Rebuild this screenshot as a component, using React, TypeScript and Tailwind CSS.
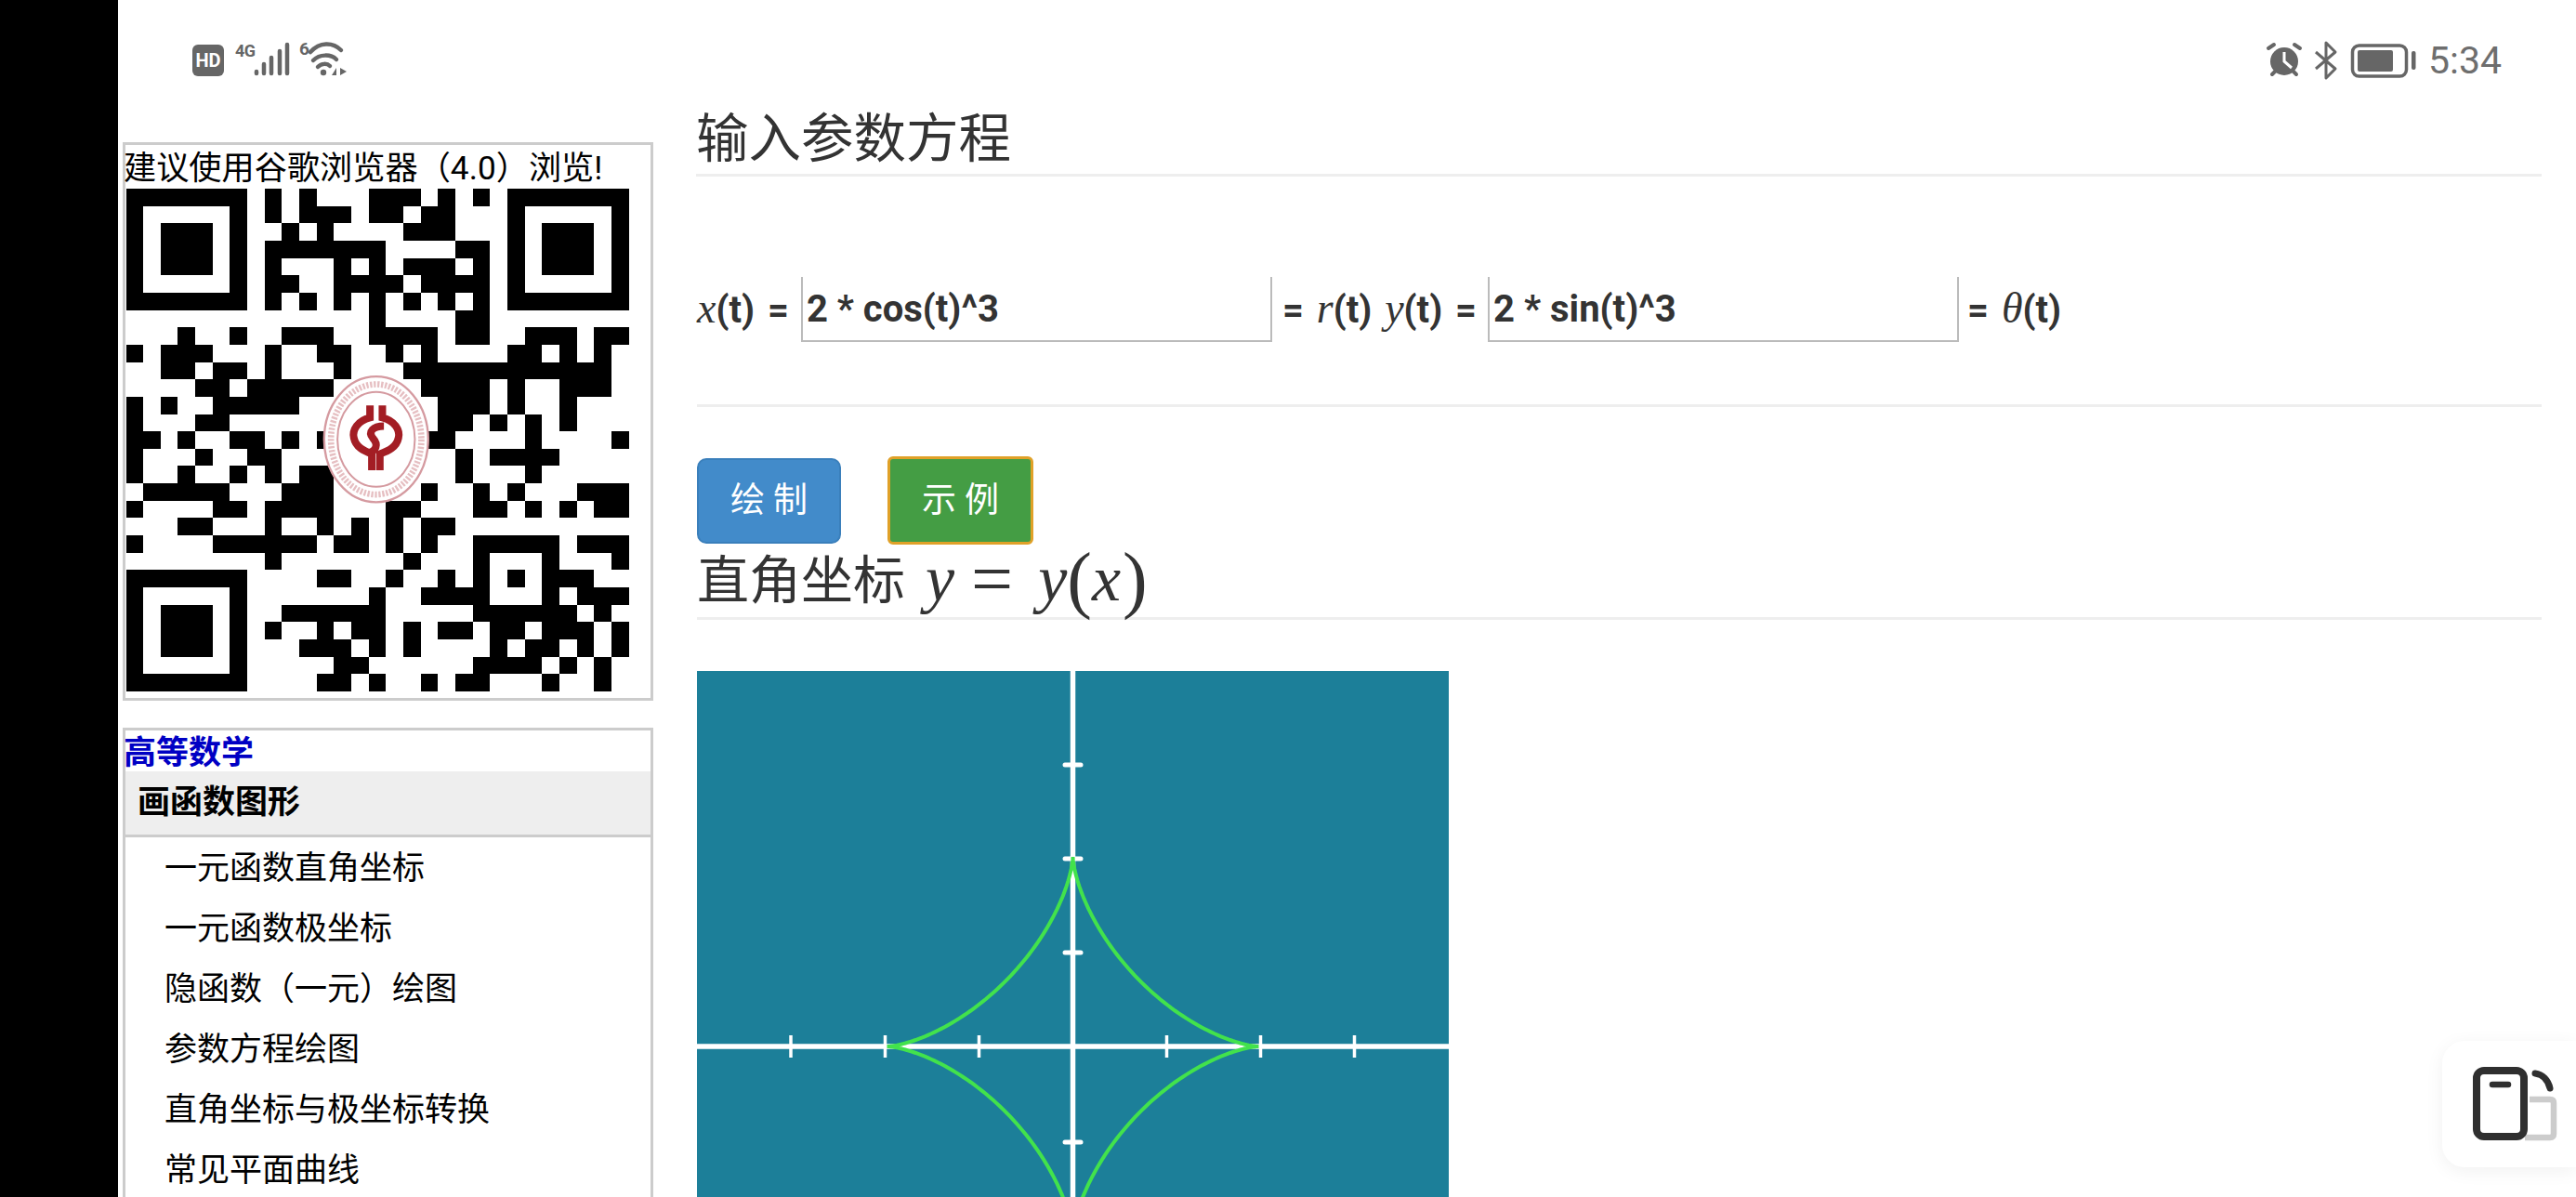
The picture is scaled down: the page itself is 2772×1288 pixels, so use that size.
const CJK = "font-['Roboto','Noto_Sans_CJK_SC',sans-serif]";

// dark modules of the code, by row, finder squares are added below
const QR_ROWS = [
  "8 10 14-16 18 20",
  "8 10-12 14-15 17-18",
  "9 11 16-18",
  "8-14 19-20",
  "8 12 14 16-18 20",
  "8-9 12-15 17-20",
  "8 10 12 14 16 18 20",
  "14 19-20",
  "3 6 9-11 14-17 19-20 23-25 27-28",
  "0 2-4 8 11-12 15 17 22-23 25 27",
  "2-3 5-6 8 12 16-27",
  "4-5 7-11 17-20 22 25-27",
  "0 2 5-9 18-20 22 25",
  "0 4-5 18-19 21 23 25",
  "0-1 3 6-7 9 11 17-18 23 28",
  "0 4 7-8 19 21-24",
  "0 3 6 8 10-11 19 23",
  "1-5 9-11 17 20 22 26-28",
  "0 5-6 8-11 15-16 20-21 23 25 27-28",
  "3-4 8 11 13 15 17-18",
  "0 5-10 12-13 15 17 20-24 26-28",
  "8 16 20 24 28",
  "11-12 15 18 20 22 24-26",
  "14 17-20 24 26-28",
  "9-14 20-25 27",
  "8 11 13-14 16 18-19 21-22 24-26 28",
  "10-12 14 16 21 23-24 26 28",
  "12-13 20-23 25 27",
  "11-12 14 17 19-20 24 27",
];

const MENU = ["一元函数直角坐标", "一元函数极坐标", "隐函数（一元）绘图", "参数方程绘图", "直角坐标与极坐标转换", "常见平面曲线"];

function Finder({ x, y }: { x: number; y: number }) {
  return (
    <g>
      <rect x={x} y={y} width={7} height={7} fill="#000" />
      <rect x={x + 1} y={y + 1} width={5} height={5} fill="#fff" />
      <rect x={x + 2} y={y + 2} width={3} height={3} fill="#000" />
    </g>
  );
}

function QrCode() {
  const rects: React.ReactNode[] = [];
  QR_ROWS.forEach((row, r) => {
    row.split(" ").forEach((part) => {
      const [a, b] = part.split("-").map(Number);
      rects.push(<rect key={r + "-" + part} x={a} y={r} width={(b ?? a) - a + 1} height={1} fill="#000" />);
    });
  });
  return (
    <svg viewBox="0 0 29 29" className="block w-[542px] h-[541px]">
      <g shapeRendering="crispEdges">
        {rects}
        <Finder x={0} y={0} />
        <Finder x={22} y={0} />
        <Finder x={0} y={22} />
      </g>
      {/* school seal in the middle, drawn in 160x170 box units */}
      <g transform="translate(9.97 9.55) scale(0.01786 0.01786)">
        <ellipse cx="250" cy="275" rx="170" ry="205" fill="#fff" />
        <ellipse cx="250" cy="275" rx="168" ry="203" fill="none" stroke="#d59aa0" strokeWidth="7" />
        <ellipse cx="250" cy="275" rx="146" ry="178" fill="none" stroke="#e6bfc2" strokeWidth="20" strokeDasharray="7 5" />
        <ellipse cx="250" cy="275" rx="125" ry="153" fill="none" stroke="#d59aa0" strokeWidth="6" />
        <g fill="none" stroke="#a31d24" strokeWidth="24">
          <path d="M230 165V205C190 215 172 245 178 270C184 300 210 312 236 322V375" />
          <path d="M270 165V205C310 215 328 245 322 270C316 300 290 312 262 322V375" />
          <path d="M275 232C240 232 222 250 240 272C258 292 250 312 226 318" />
        </g>
      </g>
    </svg>
  );
}

function StatusLeft() {
  return (
    <svg viewBox="200 40 180 50" className="w-[180px] h-[50px]">
      <rect x="207" y="47" width="34" height="34" rx="6" fill="#666" />
      <text x="224" y="71" textAnchor="middle" fill="#fff" fontSize="20" fontWeight="700" fontFamily="Roboto, sans-serif">HD</text>
      <text x="253" y="60" fill="#666" fontSize="18" fontWeight="700" fontFamily="Roboto, sans-serif" textLength="22">4G</text>
      <g stroke="#666" strokeWidth="4.5" strokeLinecap="round">
        <path d="M276 78V76" />
        <path d="M284 78V68" />
        <path d="M292 78V61" />
        <path d="M301 78V54" />
        <path d="M309 78V47" />
      </g>
      <text x="322" y="58" fill="#666" fontSize="19" fontWeight="700" fontFamily="Roboto, sans-serif">6</text>
      <g fill="none" stroke="#666" strokeWidth="4.5" strokeLinecap="round">
        <path d="M334 55C344 44 358 44 367 53" />
        <path d="M337 64C344 57 356 57 362 63" />
        <path d="M342 71C346 67 352 67 355 70" />
      </g>
      <circle cx="348" cy="77" r="3.2" fill="#666" />
      <path d="M362 72V80H357ZM366 72L373 76L366 80Z" fill="#666" />
    </svg>
  );
}

function StatusRight() {
  return (
    <svg viewBox="2440 40 165 50" className="w-[165px] h-[50px]">
      <circle cx="2460" cy="65" r="15" fill="#666" />
      <path d="M2460 55V65L2468 72" fill="none" stroke="#fff" strokeWidth="3" />
      <g stroke="#666" strokeWidth="4" strokeLinecap="round">
        <path d="M2443 51L2449 47" />
        <path d="M2477 51L2471 47" />
        <path d="M2447 79L2450 76" />
        <path d="M2473 79L2470 76" />
      </g>
      <path d="M2494 55L2515 73L2505 83V45L2515 55L2494 73" fill="none" stroke="#666" strokeWidth="3" strokeLinejoin="round" />
      <rect x="2533.5" y="48" width="58" height="33" rx="7" fill="none" stroke="#666" strokeWidth="3.5" />
      <rect x="2539" y="53" width="38" height="23" rx="2" fill="#666" />
      <rect x="2597" y="54" width="4.5" height="20" rx="2" fill="#666" />
    </svg>
  );
}

function Plot() {
  const cx = 1154.5;
  const cy = 1125;
  const pts: string[] = [];
  for (let i = 0; i <= 360; i++) {
    const t = (i / 180) * Math.PI;
    pts.push((cx + 200 * Math.cos(t) ** 3).toFixed(1) + "," + (cy + 204 * Math.sin(t) ** 3).toFixed(1));
  }
  const xTicks = [851, 952.5, 1053.5, 1255.5, 1356.5, 1457.5];
  const yTicks = [822, 923, 1024, 1228];
  return (
    <svg viewBox="750 721 809 567" className="block w-[809px] h-[567px] bg-[#1c7f99]">
      <path d="M1154.5 721V1288M750 1125H1559" stroke="#fff" strokeWidth="5.5" />
      {xTicks.map((x) => (
        <path key={x} d={`M${x} 1113V1137`} stroke="#fff" strokeWidth="3.5" />
      ))}
      {yTicks.map((y) => (
        <path key={y} d={`M1146 ${y}H1163`} stroke="#fff" strokeWidth="5" strokeLinecap="round" />
      ))}
      <polygon points={pts.join(" ")} fill="none" stroke="#42e24c" strokeWidth="4" />
    </svg>
  );
}

function MathVar({ children }: { children: React.ReactNode }) {
  return <i className="font-['Liberation_Serif',serif] font-normal text-[46px] leading-none">{children}</i>;
}

function BigMath({ children, className }: { children: React.ReactNode; className?: string }) {
  return <span className={`font-['Liberation_Serif',serif] leading-none ${className ?? ""}`}>{children}</span>;
}

export default function App() {
  return (
    <div className={`flex w-[2772px] h-[1288px] overflow-hidden bg-white text-black ${CJK}`}>
      <div className="w-[127px] shrink-0 bg-black" />
      <div className="flex-1 relative">
        <div className="h-[113px] flex justify-between items-start pt-[41px] pl-[73px] pr-[80px]">
          <StatusLeft />
          <div className="flex items-center h-[50px] gap-[10px]">
            <StatusRight />
            <span className="text-[41px] font-normal text-[#6e6e6e] font-['Roboto',sans-serif]">5:34</span>
          </div>
        </div>

        <div className="flex pl-[5px]">
          <aside className="w-[571px] shrink-0 pt-[40px]">
            <div className="h-[601px] border-[3px] border-[#ccc] text-[35px]">
              <div className="h-[47px] leading-[50px] whitespace-nowrap -ml-[2px] text-[35.2px]">建议使用谷歌浏览器（4.0）浏览!</div>
              <QrCode />
            </div>
            <div className="mt-[29px] border-[3px] border-b-0 border-[#ccc] text-[35px] h-[520px]">
              <div className="h-[44px] leading-[49px] font-bold text-[#0000c4] -ml-[2px]">高等数学</div>
              <div className="h-[71px] pl-[13px] flex items-center font-bold bg-[#eee] border-b-[3px] border-[#ccc]">画函数图形</div>
              <ul className="pl-[42px] pt-[1px]">
                {MENU.map((item) => (
                  <li key={item} className="h-[65px] leading-[65px]">{item}</li>
                ))}
              </ul>
            </div>
          </aside>

          <main className="w-[1985px] ml-[47px] text-[#333]">
            <h1 className="h-[77px] flex items-center text-[56.5px] font-normal border-b-[3px] border-[#eee] -ml-[1px]">输入参数方程</h1>
            <form className="mt-[108px] h-[71px] flex items-center text-[40px] font-bold whitespace-nowrap [word-spacing:4px]">
              <span><MathVar>x</MathVar>(t) =</span>
              <input readOnly defaultValue="2 * cos(t)^3" className="ml-[13px] w-[507px] h-[70px] pl-[4px] mb-[1px] font-bold outline-none border-x-[2px] border-b-[2px] border-[#bbb]" />
              <span className="ml-[11px]">= <MathVar>r</MathVar>(t) <MathVar>y</MathVar>(t) =</span>
              <input readOnly defaultValue="2 * sin(t)^3" className="ml-[12px] w-[507px] h-[70px] pl-[4px] mb-[1px] font-bold outline-none border-x-[2px] border-b-[2px] border-[#bbb]" />
              <span className="ml-[9px]">= <MathVar>θ</MathVar>(t)</span>
            </form>
            <div className="mt-[66px] border-t-[3px] border-[#eee]" />
            <div className="mt-[53px] flex items-center gap-[50px] text-[37px] text-white">
              <button type="button" className="w-[155px] h-[92px] rounded-[10px] bg-[#428bca] border-2 border-[#3a7fbb]">绘 制</button>
              <button type="button" className="w-[157px] h-[95px] rounded-[6px] bg-[#449d44] border-[3px] border-[#e0a128]">示 例</button>
            </div>
            <h2 className="h-[81px] flex items-center text-[56px] font-normal border-b-[3px] border-[#eee] whitespace-pre">
              直角坐标
              <BigMath className="text-[70px] italic ml-[22px] mb-[4px]">y</BigMath>
              <BigMath className="text-[80px] ml-[18px] mb-[4px]">=</BigMath>
              <BigMath className="text-[70px] italic ml-[27px] mb-[4px]">y</BigMath>
              <BigMath className="text-[80px] mb-[4px]">(</BigMath>
              <BigMath className="text-[70px] italic mb-[4px]">x</BigMath>
              <BigMath className="text-[80px] ml-[2px] mb-[4px]">)</BigMath>
            </h2>
            <div className="mt-[55px]">
              <Plot />
            </div>
          </main>
        </div>

        {/* floating rotate-lock button */}
        <div className="absolute right-0 top-[1120px] w-[144px] h-[136px] rounded-l-[24px] bg-white shadow-[0_4px_20px_rgba(0,0,0,0.06)]">
          <svg viewBox="2628 1120 144 136" className="w-[144px] h-[136px]">
            <path d="M2722 1183H2744Q2748 1183 2748 1187V1220Q2748 1224 2744 1224H2717" fill="none" stroke="#ccc" strokeWidth="6.5" />
            <rect x="2665" y="1152" width="51" height="71" rx="8" fill="#fff" stroke="#2f2f2f" strokeWidth="8" />
            <path d="M2682 1167H2699" stroke="#2f2f2f" strokeWidth="6.5" strokeLinecap="round" />
            <path d="M2728 1155C2736 1156 2742 1162 2744 1171" fill="none" stroke="#2f2f2f" strokeWidth="7" strokeLinecap="round" />
          </svg>
        </div>
      </div>
    </div>
  );
}
